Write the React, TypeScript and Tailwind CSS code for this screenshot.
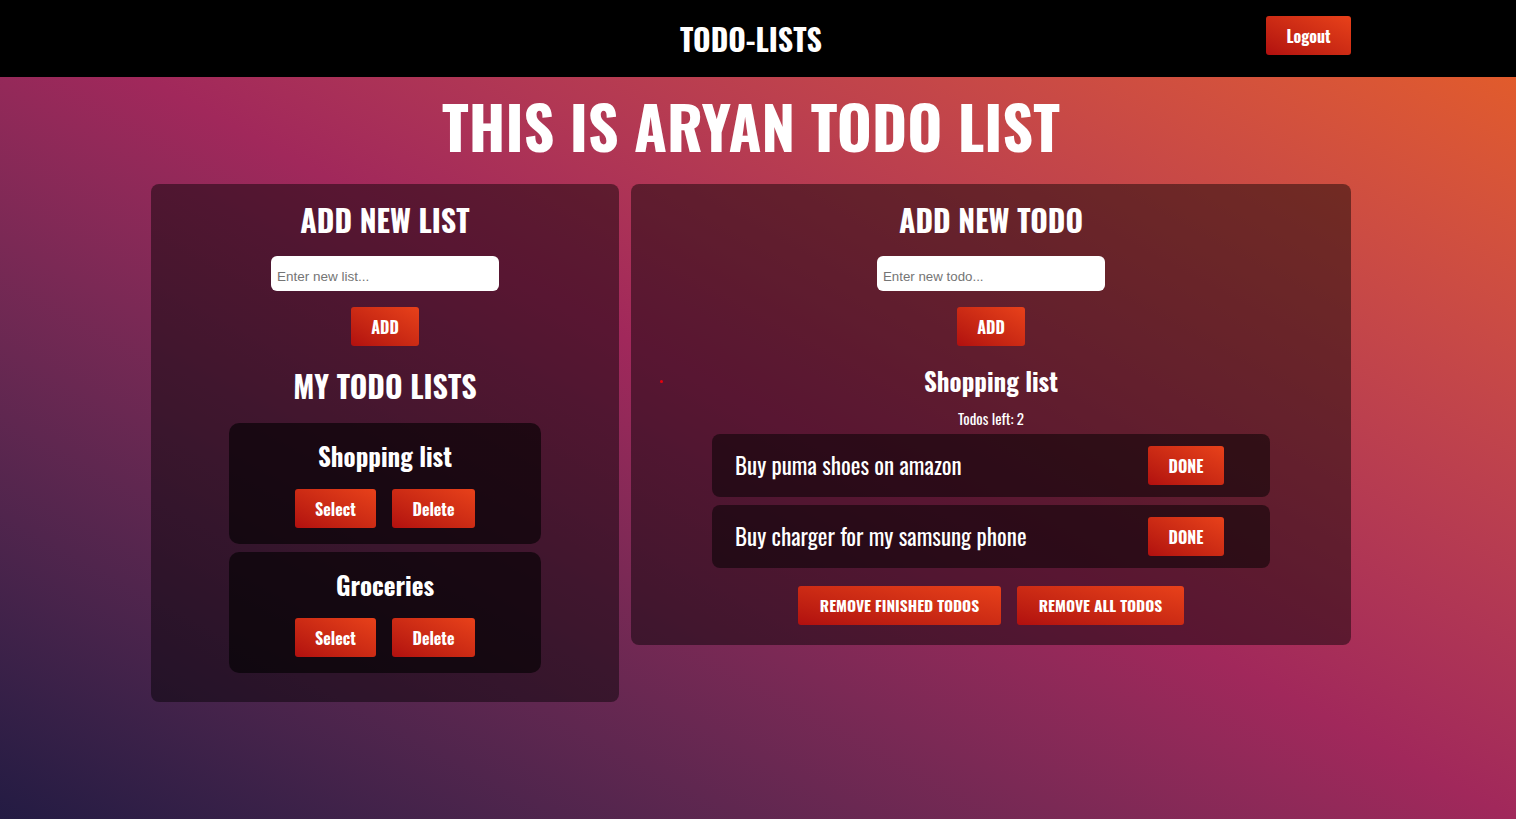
const condensed = "font-['Oswald','Liberation_Sans_Narrow','DejaVu_Sans_Condensed',sans-serif]";

const lists = ["Shopping list", "Groceries"];
const todos = ["Buy puma shoes on amazon", "Buy charger for my samsung phone"];

const RedButton = ({ children, className = "" }: { children: React.ReactNode; className?: string }) => (
    <button
        className={`h-[39px] rounded-[3px] bg-linear-to-tr from-[#b10f0f] to-[#e8411a] font-bold text-white ${className}`}
    >
        {children}
    </button>
);

const App = () => {
    return (
        <div className={`min-h-[819px] w-full bg-linear-to-tr from-[#231b43] via-[#a1285b] via-50% to-[#e8601e] ${condensed}`}>
            <nav className="h-[77px] w-full bg-black">
                <div className="relative flex h-full w-[1502px] items-center justify-center">
                    <h1 className="text-[30px] font-bold text-white">TODO-LISTS</h1>
                    <RedButton className="absolute left-[1266px] top-[16px] h-[38px] w-[85px] text-[16px]">Logout</RedButton>
                </div>
            </nav>

            <div className="flex w-[1502px] flex-col items-center">
                <h2 className="text-[60px] leading-[96px] font-bold text-white">THIS IS ARYAN TODO LIST</h2>

                <div className="mt-[11px] flex items-start gap-[12px]">
                    <section className="flex w-[468px] flex-col items-center rounded-[8px] bg-black/45 pb-[29px] pt-[16px]">
                        <h3 className="text-[30px] leading-[40px] font-bold text-white">ADD NEW LIST</h3>
                        <input
                            placeholder="Enter new list..."
                            className="mt-[16px] h-[35px] w-[228px] rounded-[6px] bg-white px-[6px] pt-[6px] font-['Liberation_Sans',sans-serif] text-[13.5px] text-gray-800 placeholder:text-[#757575] outline-none"
                        />
                        <RedButton className="mt-[16px] w-[68px] text-[16px]">ADD</RedButton>
                        <h3 className="mt-[20px] text-[30px] leading-[40px] font-bold text-white">MY TODO LISTS</h3>
                        <div className="mt-[17px] flex flex-col gap-[8px]">
                            {lists.map((name) => (
                                <div key={name} className="flex h-[121px] w-[312px] flex-col items-center rounded-[10px] bg-black/60 pt-[17px]">
                                    <h4 className="text-[25px] leading-[32px] font-bold text-white">{name}</h4>
                                    <div className="mt-[17px] flex gap-[16px]">
                                        <RedButton className="w-[81px] text-[16px]">Select</RedButton>
                                        <RedButton className="w-[83px] text-[16px]">Delete</RedButton>
                                    </div>
                                </div>
                            ))}
                        </div>
                    </section>

                    <section className="relative flex w-[720px] flex-col items-center rounded-[8px] bg-black/45 pb-[20px] pt-[16px]">
                        <span className="absolute left-[29px] top-[196px] h-[3px] w-[3px] rounded-full bg-red-600" />
                        <h3 className="text-[30px] leading-[40px] font-bold text-white">ADD NEW TODO</h3>
                        <input
                            placeholder="Enter new todo..."
                            className="mt-[16px] h-[35px] w-[228px] rounded-[6px] bg-white px-[6px] pt-[6px] font-['Liberation_Sans_Narrow','Liberation_Sans',sans-serif] text-[13.3px] text-gray-800 placeholder:text-[#757575] outline-none"
                        />
                        <RedButton className="mt-[16px] w-[68px] text-[16px]">ADD</RedButton>
                        <h4 className="mt-[19px] text-[25px] leading-[32px] font-bold text-white">Shopping list</h4>
                        <p className="mt-[11px] text-[15px] leading-[20px] text-white">Todos left: 2</p>
                        <div className="mt-[6px] flex flex-col gap-[8px]">
                            {todos.map((todo) => (
                                <div key={todo} className="flex h-[63px] w-[558px] items-center justify-between rounded-[8px] bg-black/50 pl-[23px] pr-[46px]">
                                    <span className="text-[23px] text-white">{todo}</span>
                                    <RedButton className="w-[76px] text-[16px]">DONE</RedButton>
                                </div>
                            ))}
                        </div>
                        <div className="mt-[18px] flex gap-[16px]">
                            <RedButton className="h-[38px] w-[203px] text-[15.5px]">REMOVE FINISHED TODOS</RedButton>
                            <RedButton className="h-[38px] w-[167px] text-[15.5px]">REMOVE ALL TODOS</RedButton>
                        </div>
                    </section>
                </div>
            </div>
        </div>
    );
};

export default App;
